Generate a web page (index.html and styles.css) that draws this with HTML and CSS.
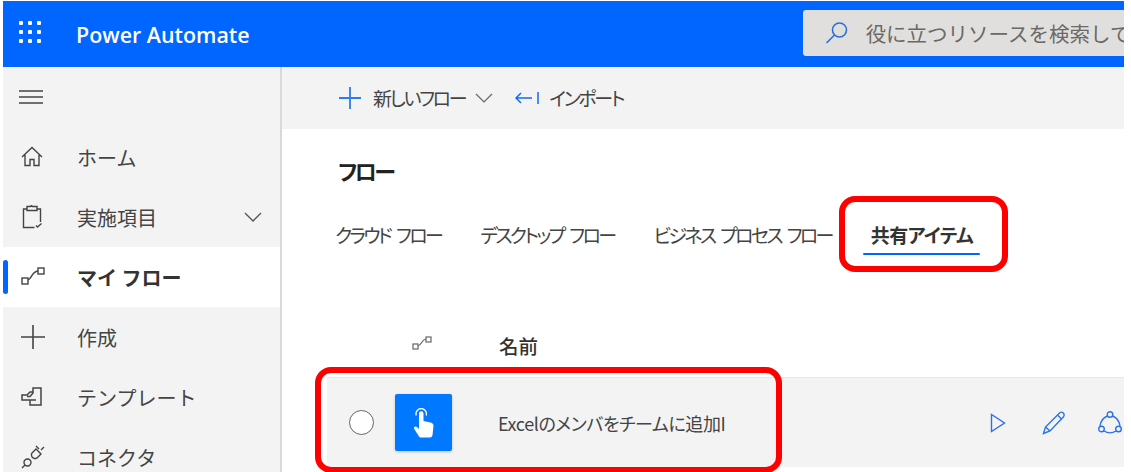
FILE: index.html
```html
<!DOCTYPE html>
<html lang="ja">
<head>
  <meta charset="UTF-8">
  <title>Power Automate</title>
  <link rel="stylesheet" href="styles.css">
</head>
<body>
  <div class="app">
    <header class="topbar">
      <svg class="waffle" width="22" height="22" viewBox="0 0 22 22" fill="#fff">
        <rect x="0" y="0" width="4" height="4" rx="1"/><rect x="9" y="0" width="4" height="4" rx="1"/><rect x="18" y="0" width="4" height="4" rx="1"/>
        <rect x="0" y="9" width="4" height="4" rx="1"/><rect x="9" y="9" width="4" height="4" rx="1"/><rect x="18" y="9" width="4" height="4" rx="1"/>
        <rect x="0" y="18" width="4" height="4" rx="1"/><rect x="9" y="18" width="4" height="4" rx="1"/><rect x="18" y="18" width="4" height="4" rx="1"/>
      </svg>
      <span class="brand">Power Automate</span>
      <div class="search">
        <svg class="search-icon" width="24" height="24" viewBox="0 0 24 24" fill="none" stroke="#2f6fd6" stroke-width="1.6">
          <circle cx="14.5" cy="9" r="7"/><path d="M9.5 14 1.5 22"/>
        </svg>
        <span class="search-text">役に立つリソースを検索して</span>
      </div>
    </header>
    <div class="main">
      <nav class="sidebar">
        <div class="nav-toggle">
          <svg width="24" height="14" viewBox="0 0 24 14" stroke="#444" stroke-width="1.4"><path d="M0 1h24M0 7h24M0 13h24"/></svg>
        </div>
        <div class="nav-item">
          <svg class="nav-icon" width="22" height="22" viewBox="0 0 22 22" fill="none" stroke="#444" stroke-width="1.4"><path d="M1 11 11 1.500 21 11M4 9v10.500h5v-6h4v6h5V9"/></svg>
          <span>ホーム</span>
        </div>
        <div class="nav-item">
          <svg class="nav-icon" width="22" height="24" viewBox="0 0 22 24" fill="none" stroke="#444" stroke-width="1.4"><path d="M6 4H2.500v18.500h11M16 4h3.500v13M6 5.500V1.500h3.500l1-1 1 1H16v4z"/><path d="m15 20.500 1.500 1.500 4-3.500"/></svg>
          <span>実施項目</span>
          <svg class="nav-chevron" width="18" height="10" viewBox="0 0 18 10" fill="none" stroke="#555" stroke-width="1.3"><path d="m1 1 8 8 8-8"/></svg>
        </div>
        <div class="nav-item active">
          <svg class="nav-icon" width="24" height="20" viewBox="0 0 24 20" fill="none" stroke="#444" stroke-width="1.4"><rect x="1" y="11" width="6" height="6"/><rect x="17" y="1" width="6" height="6"/><path d="M7 13c4-1 3-8 10-9"/></svg>
          <span>マイ フロー</span>
        </div>
        <div class="nav-item">
          <svg class="nav-icon" width="24" height="24" viewBox="0 0 24 24" stroke="#444" stroke-width="1.6"><path d="M12 0v24M0 12h24"/></svg>
          <span>作成</span>
        </div>
        <div class="nav-item">
          <svg class="nav-icon" width="22" height="20" viewBox="0 0 22 20" fill="none" stroke="#444" stroke-width="1.5"><path d="M12 1h8v17H9v-5H1V8h5l3-3h3zM12 1v5l-3 3.500H6M9 13h6"/></svg>
          <span>テンプレート</span>
        </div>
        <div class="nav-item">
          <svg class="nav-icon" width="24" height="24" viewBox="0 0 24 24" fill="none" stroke="#444" stroke-width="1.4"><path d="m1 23 3-3M11 8l4-4 5 5-4 4c-1 1-3.500 .5-4.500-.5S10 9 11 8zM20 5l3-3M15 1l3 3"/><circle cx="6.500" cy="17.500" r="3.500"/></svg>
          <span>コネクタ</span>
        </div>
      </nav>
      <main class="content">
        <div class="toolbar">
          <svg class="toolbar-plus" width="24" height="24" viewBox="0 0 24 24" stroke="#2b7cf0" stroke-width="1.8"><path d="M12 1v22M1 12h22"/></svg>
          <span class="toolbar-label">新しいフロー</span>
          <svg class="toolbar-chevron" width="18" height="10" viewBox="0 0 18 10" fill="none" stroke="#666" stroke-width="1.200"><path d="m1 1 8 8 8-8"/></svg>
          <svg class="toolbar-import" width="24" height="14" viewBox="0 0 24 14" fill="none" stroke="#0f6cf5" stroke-width="1.500"><path d="M1 7h16M6 2 1 7l5 5M23 1v12"/></svg>
          <span class="toolbar-label">インポート</span>
        </div>
        <h1 class="page-title">フロー</h1>
        <div class="tabs">
          <span class="tab">クラウド フロー</span>
          <span class="tab">デスクトップ フロー</span>
          <span class="tab">ビジネス プロセス フロー</span>
          <span class="tab selected">共有アイテム</span>
        </div>
        <div class="list-head">
          <svg class="head-icon" width="20" height="14" viewBox="0 0 20 14" fill="none" stroke="#666" stroke-width="1.200"><rect x="1" y="8" width="5" height="5"/><rect x="14" y="1" width="5" height="5"/><path d="M6 10c4-1 3-6 8-7"/></svg>
          <span class="head-name">名前</span>
        </div>
        <div class="row">
          <span class="radio"></span>
          <span class="flow-tile">
            <svg width="22" height="30" viewBox="0 0 22 30" fill="#fff"><path d="M6 5.500a2.200 2.200 0 0 1 4.500 0v7.500l7 1.500c2 .5 3 1.500 3 3.500l-1 9c-.2 1.500-1 2.500-2.500 2.500H8c-1 0-1.500-.5-2-1l-5-8c-.8-1.500 1.500-3 3-1.500l2 2z"/><path d="M3.300 7.500a5.200 5.200 0 1 1 9.800 0" fill="none" stroke="#fff" stroke-width="1.300"/></svg>
          </span>
          <span class="flow-name">Excelのメンバをチームに追加I</span>
          <div class="row-actions">
            <svg class="action-run" width="16" height="20" viewBox="0 0 16 20" fill="none" stroke="#2b72ea" stroke-width="1.400"><path d="M1.500 1.500v17l13-8.500z"/></svg>
            <svg width="24" height="24" viewBox="0 0 24 24" fill="none" stroke="#2b72ea" stroke-width="1.400"><path d="M1.500 22.500 3.500 16 17.500 2c1.200-1 2.800-1 3.800 0s1.200 2.800 0 4L8 20zM3.500 16 8 20M15.500 4l4.500 4.500"/></svg>
            <svg width="24" height="24" viewBox="0 0 24 24" fill="none" stroke="#2b72ea" stroke-width="1.400"><circle cx="12" cy="3.500" r="2.800"/><circle cx="3.500" cy="18" r="2.800"/><circle cx="20.500" cy="18" r="2.800"/><path d="M9.500 5C6 6.500 2.500 10 2 15M14.500 5c3.500 1.500 7 5 7.500 10M6 20c4 2.500 8 2.500 12 0"/></svg>
          </div>
        </div>
      </main>
    </div>
    <div class="callout callout-tab"></div>
    <div class="callout callout-row"></div>
  </div>
</body>
</html>
```

FILE: styles.css
```css
:root {
  --blue: #0066ff;
  --gray-bg: #f3f3f3;
  --text-color: #333333;
  --cjk: "Noto Sans CJK JP", "Open Sans", sans-serif;
}

html, body {
  margin: 0;
  height: 100%;
  overflow: hidden;
  background-color: white;
}

body {
  font-family: var(--cjk);
  color: var(--text-color);
  font-feature-settings: "palt";
}

.app {
  position: relative;
  height: 471px;
  margin: 1px 7px 0 3px;
  overflow: hidden;
}

/* top bar */
.topbar {
  display: flex;
  align-items: center;
  height: 66px;
  background-color: var(--blue);
  box-sizing: border-box;
}

.waffle {
  margin: 0 0 5px 16px;
}

.brand {
  margin-left: 35px;
  font-family: "Open Sans", sans-serif;
  font-size: 21.4px;
  font-weight: 600;
  color: white;
}

.search {
  display: flex;
  align-items: center;
  flex: 1;
  height: 46px;
  margin: 0 0 2px 553px;
  padding-left: 22px;
  background-color: #e1dfdd;
  border-radius: 3px 0 0 3px;
  overflow: hidden;
}

.search-icon {
  flex-shrink: 0;
}

.search-text {
  margin-left: 17px;
  font-size: 20.5px;
  color: #6b6865;
  white-space: nowrap;
  font-feature-settings: normal;
}

.main {
  display: flex;
  height: 405px;
}

/* sidebar */
.sidebar {
  width: 277px;
  flex-shrink: 0;
  background-color: var(--gray-bg);
  border-right: 2px solid #d9d9d9;
}

.nav-toggle {
  display: flex;
  align-items: center;
  height: 60px;
  padding-left: 16px;
}

.nav-item {
  position: relative;
  display: flex;
  align-items: center;
  height: 60px;
  font-size: 20px;
  color: #444;
  font-feature-settings: normal;
}

.nav-icon {
  position: absolute;
  left: 18px;
}

.nav-item span {
  margin-left: 74px;
  white-space: nowrap;
}

.nav-chevron {
  margin-left: auto;
  margin-right: 18px;
}

.nav-item.active {
  background-color: white;
  font-weight: 700;
  color: #333;
}

.nav-item.active:before {
  content: "";
  position: absolute;
  left: 0;
  top: 13px;
  width: 5px;
  height: 34px;
  background-color: var(--blue);
  border-radius: 3px;
}

/* content */
.content {
  flex: 1;
  min-width: 0;
}

.toolbar {
  display: flex;
  align-items: center;
  height: 62px;
  padding-left: 56px;
  background-color: var(--gray-bg);
  font-size: 19px;
  letter-spacing: -2.3px;
  color: #444;
}

.toolbar-label {
  white-space: nowrap;
  margin-bottom: 2px;
}

.toolbar-plus {
  margin-right: 11px;
}

.toolbar-chevron {
  margin-left: 10px;
}

.toolbar-import {
  margin: 0 10px 0 22px;
}

.page-title {
  margin: 25px 0 0 56px;
  font-size: 22px;
  font-weight: 700;
  line-height: 32px;
  letter-spacing: -2.6px;
  color: #222;
}

.tabs {
  display: flex;
  align-items: center;
  gap: 39px;
  margin: 34px 0 0 53px;
  font-size: 19px;
  letter-spacing: -2.6px;
  word-spacing: 4px;
  color: #444;
}

.tab {
  position: relative;
  line-height: 30px;
  white-space: nowrap;
}

.tab.selected {
  margin-left: 0;
  font-weight: 700;
  letter-spacing: -0.6px;
  color: #333;
}

.tab.selected:after {
  content: "";
  position: absolute;
  left: -8px;
  right: -7px;
  bottom: -5px;
  height: 2px;
  background-color: var(--blue);
  border-radius: 1px;
}

.list-head {
  display: flex;
  align-items: center;
  margin-top: 80px;
  height: 30px;
}

.head-icon {
  margin: 0 0 4px 130px;
}

.head-name {
  margin-left: 67px;
  font-size: 19.5px;
  font-weight: 500;
}

.row {
  display: flex;
  align-items: center;
  height: 90px;
  margin: 17px 0 0 45px;
  background-color: var(--gray-bg);
  border-top: 1px solid #e8e8e8;
  box-sizing: border-box;
}

.radio {
  width: 25px;
  height: 25px;
  margin-left: 22px;
  border: 1.5px solid #666;
  border-radius: 50%;
  background-color: white;
  box-sizing: border-box;
}

.flow-tile {
  display: flex;
  align-items: center;
  justify-content: center;
  width: 57px;
  height: 57px;
  margin-left: 21px;
  background-color: #0078ff;
  border-radius: 2px;
  box-shadow: 0 1px 3px rgba(0, 0, 0, 0.2);
}

.flow-name {
  margin-left: 46px;
  font-size: 18px;
  letter-spacing: -0.4px;
  color: #444;
  white-space: nowrap;
}

.row-actions {
  display: flex;
  align-items: center;
  gap: 32px;
  margin-left: auto;
  padding-right: 2px;
}

.action-run {
  margin-right: 4px;
}

/* red callouts drawn over the screenshot */
.callout {
  position: absolute;
  box-sizing: border-box;
  border: 6px solid #ff0000;
  border-radius: 16px;
}

.callout-tab {
  left: 836px;
  top: 195px;
  width: 169px;
  height: 76px;
}

.callout-row {
  left: 312px;
  top: 366px;
  width: 467px;
  height: 106px;
}
```
